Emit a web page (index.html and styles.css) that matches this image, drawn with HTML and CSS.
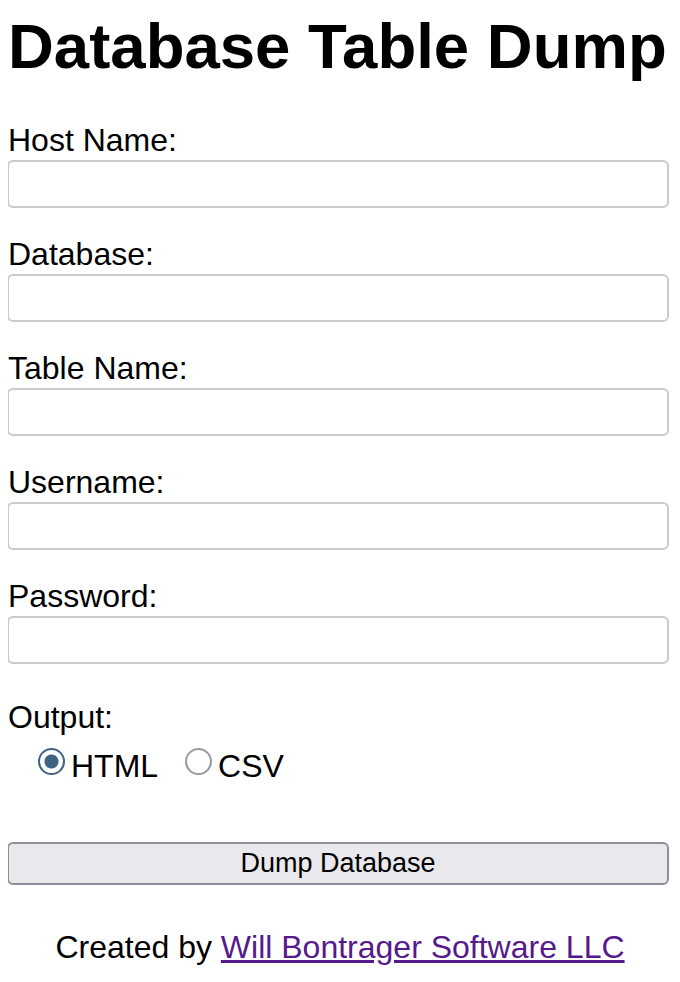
FILE: index.html
```html
<!DOCTYPE html>
<html lang="en">
<head>
<meta charset="utf-8">
<title>Database Table Dump</title>
<link rel="stylesheet" href="styles.css">
</head>
<body>
<h1 class="title">Database Table Dump</h1>
<form class="dump-form">
  <div class="field">
    <label class="field-label" for="host">Host Name:</label>
    <input class="text-input" type="text" id="host">
  </div>
  <div class="field">
    <label class="field-label" for="db">Database:</label>
    <input class="text-input" type="text" id="db">
  </div>
  <div class="field">
    <label class="field-label" for="table">Table Name:</label>
    <input class="text-input" type="text" id="table">
  </div>
  <div class="field">
    <label class="field-label" for="user">Username:</label>
    <input class="text-input" type="text" id="user">
  </div>
  <div class="field">
    <label class="field-label" for="pass">Password:</label>
    <input class="text-input" type="password" id="pass">
  </div>
  <div class="output">
    <div class="field-label">Output:</div>
    <div class="radio-row">
      <label class="radio-option"><input class="radio" type="radio" name="out" checked>HTML</label>
      <label class="radio-option"><input class="radio" type="radio" name="out">CSV</label>
    </div>
  </div>
  <button class="submit" type="button">Dump Database</button>
</form>
<p class="credit">Created by <a class="credit-link" href="#">Will Bontrager Software LLC</a></p>
</body>
</html>
```

FILE: styles.css
```css
html, body {
  background: #ffffff;
}
body {
  margin: 8px;
  font-family: "Liberation Sans", Arial, Helvetica, sans-serif;
  font-size: 32px;
  color: #000000;
}
.title {
  font-size: 63.5px;
  line-height: 74px;
  font-weight: bold;
  margin: 1px 0 39px;
}
.dump-form {
  display: flex;
  flex-direction: column;
}
.field {
  display: flex;
  flex-direction: column;
  margin-bottom: 28px;
}
.field-label {
  line-height: 37px;
  margin-bottom: 1px;
}
.text-input {
  box-sizing: border-box;
  width: 662px;
  height: 48px;
  margin: 0 0 0 -1px;
  border: 2px solid #cbcbcb;
  border-radius: 6px;
  background: #ffffff;
  font-family: inherit;
  font-size: 26px;
  padding: 0 6px;
  outline: none;
}
.output {
  margin-top: 7px;
  display: flex;
  flex-direction: column;
}
.radio-row {
  display: flex;
  align-items: center;
  padding-left: 30px;
  margin-top: 11px;
  line-height: 37px;
  gap: 27px;
}
.radio-option {
  display: flex;
  align-items: center;
}
.radio {
  appearance: none;
  -webkit-appearance: none;
  box-sizing: border-box;
  width: 27px;
  height: 27px;
  margin: 0 6px 10px 0;
  border: 2px solid #9a98a4;
  border-radius: 50%;
  background: #ffffff;
}
.radio:checked {
  border-color: #3e6383;
  background: radial-gradient(circle, #3e6383 0, #3e6383 6.5px, #ffffff 7.5px);
}
.submit {
  box-sizing: border-box;
  width: 662px;
  height: 43px;
  margin: 57px 0 0 -1px;
  border: 2px solid #8f8e9a;
  border-radius: 6px;
  background: #e9e9ed;
  font-family: inherit;
  font-size: 27px;
  color: #000000;
  padding: 0;
}
.credit {
  margin: 44px 0 0;
  text-align: center;
  line-height: 37px;
}
.credit-link {
  color: #551a8b;
  text-decoration: underline;
}
```
